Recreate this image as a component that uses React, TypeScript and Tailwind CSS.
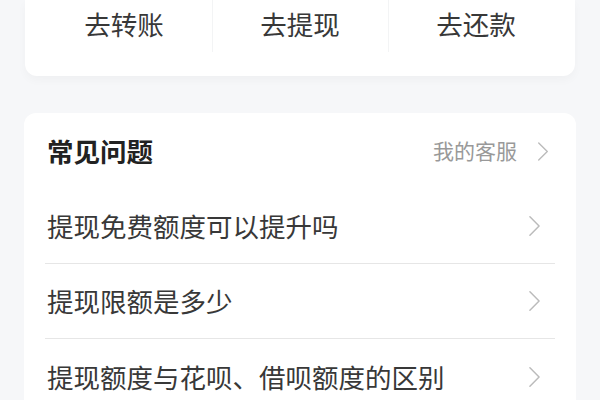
const font = { fontFamily: '"Noto Sans CJK SC", "Noto Sans", sans-serif' };

function Chevron({ className }: { className: string }) {
  return (
    <svg className={className} viewBox="0 0 14 24" fill="none" stroke="currentColor" strokeWidth={1.6} strokeLinecap="round" strokeLinejoin="round">
      <path d="M2 2l10 10L2 22" />
    </svg>
  );
}

const actions = ["去转账", "去提现", "去还款"];
const questions = ["提现免费额度可以提升吗", "提现限额是多少", "提现额度与花呗、借呗额度的区别"];

export default function App() {
  return (
    <div className="w-[600px] h-[400px] overflow-hidden bg-[#f6f7f9] flex flex-col" style={font}>
      {/* Quick actions */}
      <div className="mx-[25px] px-[11px] h-[76px] shrink-0 bg-white rounded-b-xl shadow-[0_4px_10px_rgba(0,0,0,0.03)] flex">
        {actions.map((a, i) => (
          <div key={a} className="flex-1 relative flex justify-center">
            <span className="mt-[5px] text-[26.5px] leading-[38px] text-[#383838]">{a}</span>
            {i > 0 && <div className="absolute left-0 top-0 h-[52px] w-px bg-[#f3f4f5]" />}
          </div>
        ))}
      </div>

      {/* FAQ */}
      <div className="mt-[37px] mx-[24px] bg-white rounded-xl shrink-0 px-[21px]">
        <div className="h-[76px] flex items-center justify-between">
          <span className="text-[26.5px] font-bold text-[#222222] pl-[2px]">常见问题</span>
          <div className="flex items-center gap-[20px] pr-[6px]">
            <span className="text-[21px] text-[#999999]">我的客服</span>
            <Chevron className="w-[12px] h-[21px] text-[#bbbbbb]" />
          </div>
        </div>
        {questions.map((q, i) => (
          <div
            key={q}
            className={`h-[75px] flex items-center justify-between ${i < questions.length - 1 ? "border-b border-[#e6e6e6]" : ""}`}
          >
            <span className="text-[26.5px] text-[#383838] pl-[2px]">{q}</span>
            <Chevron className="w-[13px] h-[22px] text-[#bbbbbb] mr-[14px]" />
          </div>
        ))}
      </div>
    </div>
  );
}
